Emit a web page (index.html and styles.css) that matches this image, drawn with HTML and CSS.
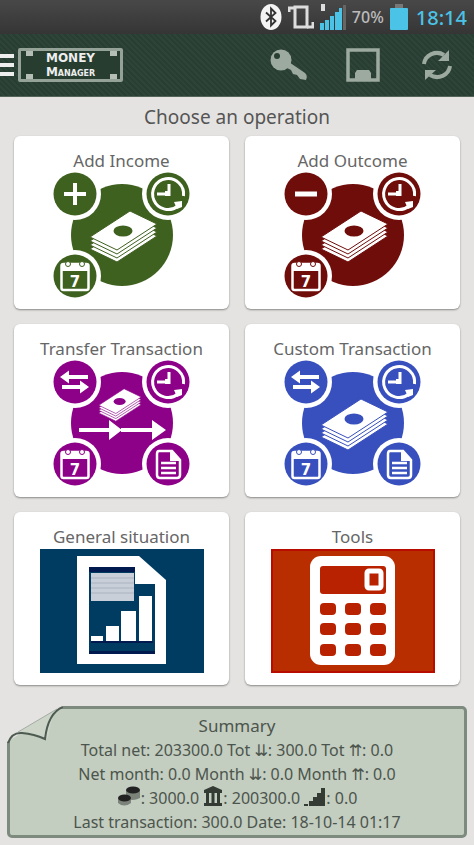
FILE: index.html
```html
<!DOCTYPE html>
<html lang="en">
<head>
    <meta charset="UTF-8">
    <meta name="viewport" content="width=device-width, initial-scale=1.0">
    <title>Money Manager</title>
    <link rel="stylesheet" href="styles.css">
</head>
<body>

    <!-- Shared icon parts -->
    <svg class="defs" aria-hidden="true">
        <symbol id="disc" viewBox="0 0 52 52">
            <circle cx="26" cy="26" r="26" fill="#fff"/>
            <circle cx="26" cy="26" r="21.500" fill="currentColor"/>
        </symbol>
        <symbol id="clock" viewBox="0 0 52 52">
            <use href="#disc"/>
            <path d="M36 38A15.500 15.500 0 1 1 41.500 28" fill="none" stroke="#fff" stroke-width="3"/>
            <path d="M32 34l8-1v6l-5 2z" fill="#fff"/>
            <path d="M27 16v12M15 26h13" fill="none" stroke="#fff" stroke-width="3"/>
            <path d="M23 23h5v5h-5z" fill="#fff"/>
        </symbol>
        <symbol id="calendar" viewBox="0 0 52 52">
            <use href="#disc"/>
            <rect x="12.500" y="14" width="27" height="26" rx="2" fill="none" stroke="#fff" stroke-width="2.500"/>
            <path d="M12 14h28v7H12z" fill="#fff"/>
            <circle cx="19" cy="14" r="2.500" fill="#fff" stroke="currentColor"/>
            <circle cx="33" cy="14" r="2.500" fill="#fff" stroke="currentColor"/>
            <text class="day" x="26" y="37">7</text>
        </symbol>
        <symbol id="swap" viewBox="0 0 52 52">
            <use href="#disc"/>
            <path d="M18 21h21M13 31h20" stroke="#fff" stroke-width="4"/>
            <path d="M11 21l9-6.500v13zM40 31l-9-6.500v13z" fill="#fff"/>
        </symbol>
        <symbol id="note" viewBox="0 0 52 52">
            <use href="#disc"/>
            <path d="M17 13h13l8 9v15q0 3-3 3H18q-3 0-3-3V16q0-3 2-3z" fill="none" stroke="#fff" stroke-width="2.500"/>
            <path d="M28 12l11 11H28z" fill="#fff"/>
            <path d="M19 25h15M19 30h15M19 35h15" stroke="#fff" stroke-width="2.500"/>
        </symbol>
        <symbol id="money" viewBox="0 0 138 126">
            <g fill="#fff" stroke="currentColor" stroke-width="1">
                <path d="M37 77l40-26 27 13-40 26z"/>
                <path d="M37 73l40-26 27 13-40 26z"/>
                <path d="M37 69l40-26 27 13-40 26z"/>
                <path d="M37 65l40-26 27 13-40 26z"/>
            </g>
            <ellipse cx="70" cy="59" rx="9.500" ry="5.500" fill="currentColor"/>
        </symbol>
    </svg>

    <!-- Status bar -->
    <div class="status-bar">
        <svg width="22" height="28" viewBox="0 0 22 28" role="img" aria-label="Bluetooth">
            <ellipse cx="11" cy="14" rx="10.500" ry="13" fill="#f4f4f4"/>
            <path d="M6 9.500l9.500 8.500-4.500 4.500V5.500l4.500 4.500L6 18.500" fill="none" stroke="#333" stroke-width="1.800"/>
        </svg>
        <svg width="26" height="26" viewBox="0 0 26 26" role="img" aria-label="Vibrate">
            <path d="M7 3h12v20H7z" fill="none" stroke="#ddd" stroke-width="3"/>
            <path d="M1 8V4h6M25 18v5h-6" fill="none" stroke="#ddd" stroke-width="3"/>
        </svg>
        <svg width="26" height="26" viewBox="0 0 26 26" role="img" aria-label="Signal">
            <path d="M0 19h4v7H0zM5 16h4v10H5zM10 12h4v14h-4zM15 8h4v18h-4z" fill="#4bc3e6"/>
            <path d="M19 4h3v22h-3z" fill="#4bc3e6"/>
            <path d="M23 1h3v25h-3z" fill="#666"/>
            <path d="M1 0h4v7H1z" fill="#ddd"/>
        </svg>
        <span class="percent">70%</span>
        <svg class="battery" width="18" height="26" viewBox="0 0 18 26" role="img" aria-label="Battery">
            <path d="M5 0h8v5H5z" fill="#777"/>
            <rect y="4" width="18" height="22" rx="1" fill="#4bc3e6"/>
        </svg>
        <span class="time">18:14</span>
    </div>

    <!-- Action bar -->
    <header class="action-bar">
        <button class="menu" aria-label="Menu">
            <svg width="14" height="22" viewBox="0 0 14 22">
                <path d="M0 2h14M0 11h14M0 20h14" stroke="#eee" stroke-width="4"/>
            </svg>
        </button>
        <div class="logo">
            <span class="logo-top">MONEY</span>
            <span class="logo-bottom">Manager</span>
            <i class="rivet tl"></i><i class="rivet tr"></i><i class="rivet bl"></i><i class="rivet br"></i>
        </div>
        <div class="actions">
            <button aria-label="Unlock">
                <svg width="38" height="32" viewBox="0 0 38 32">
                    <path d="M16 11l19 13q3 3 1 7l-6-1-3-4-4-1-2-4-8-4z" fill="#9daa9f"/>
                    <circle cx="11" cy="11" r="10.500" fill="#9daa9f"/>
                    <circle cx="7" cy="7" r="3" fill="#2a3f33"/>
                </svg>
            </button>
            <button aria-label="Save">
                <svg width="34" height="34" viewBox="0 0 34 34">
                    <path d="M2 2h30v30H2z" fill="none" stroke="#9daa9f" stroke-width="3.500"/>
                    <path d="M9 25l2-3h12l2 3v7H9z" fill="#9daa9f"/>
                </svg>
            </button>
            <button aria-label="Refresh">
                <svg width="32" height="32" viewBox="0 0 32 32">
                    <path d="M3 15A13 12.500 0 0 1 23 6M29 17A13 12.500 0 0 1 9 26" fill="none" stroke="#9daa9f" stroke-width="4"/>
                    <path d="M28 1v11H17zM4 31V21h11z" fill="#9daa9f"/>
                </svg>
            </button>
        </div>
    </header>

    <main>
        <h1>Choose an operation</h1>

        <div class="grid">
            <button class="card income">
                <span class="label">Add Income</span>
                <svg width="138" height="126" viewBox="0 0 138 126">
                    <circle cx="69" cy="63" r="51" fill="currentColor"/>
                    <use href="#money" width="138" height="126"/>
                    <use href="#disc" x="-4" y="-4" width="52" height="52"/>
                    <path d="M22 11v22M11 22h22" stroke="#fff" stroke-width="4"/>
                    <use href="#clock" x="89" y="-4" width="52" height="52"/>
                    <use href="#calendar" x="-4" y="78" width="52" height="52"/>
                </svg>
            </button>

            <button class="card outcome">
                <span class="label">Add Outcome</span>
                <svg width="138" height="126" viewBox="0 0 138 126">
                    <circle cx="69" cy="63" r="51" fill="currentColor"/>
                    <use href="#money" width="138" height="126"/>
                    <use href="#disc" x="-4" y="-4" width="52" height="52"/>
                    <path d="M11 22h22" stroke="#fff" stroke-width="5"/>
                    <use href="#clock" x="89" y="-4" width="52" height="52"/>
                    <use href="#calendar" x="-4" y="78" width="52" height="52"/>
                </svg>
            </button>

            <button class="card transfer">
                <span class="label">Transfer Transaction</span>
                <svg width="138" height="126" viewBox="0 0 138 126">
                    <circle cx="69" cy="63" r="51" fill="currentColor"/>
                    <use href="#money" x="22" y="4" width="88" height="80"/>
                    <path d="M26 70h32M68 70h34" stroke="#fff" stroke-width="4"/>
                    <path d="M56 60l13 10-13 10zM99 60l14 10-14 10z" fill="#fff"/>
                    <use href="#swap" x="-4" y="-4" width="52" height="52"/>
                    <use href="#clock" x="89" y="-4" width="52" height="52"/>
                    <use href="#calendar" x="-4" y="78" width="52" height="52"/>
                    <use href="#note" x="89" y="78" width="52" height="52"/>
                </svg>
            </button>

            <button class="card custom">
                <span class="label">Custom Transaction</span>
                <svg width="138" height="126" viewBox="0 0 138 126">
                    <circle cx="69" cy="63" r="51" fill="currentColor"/>
                    <use href="#money" width="138" height="126"/>
                    <use href="#swap" x="-4" y="-4" width="52" height="52"/>
                    <use href="#clock" x="89" y="-4" width="52" height="52"/>
                    <use href="#calendar" x="-4" y="78" width="52" height="52"/>
                    <use href="#note" x="89" y="78" width="52" height="52"/>
                </svg>
            </button>

            <button class="card">
                <span class="label">General situation</span>
                <svg width="164" height="126" viewBox="0 0 164 126">
                    <path d="M0 1h164v124H0z" fill="#003c62"/>
                    <path d="M37 8h62l27 24v84H37z" fill="#fff"/>
                    <path d="M49 19h46v17h20v70H49z" fill="#003c62"/>
                    <path d="M49 19h46v5H49zM49 103h66v3H49z" fill="#001a50"/>
                    <path d="M51 25h43v28H51z" fill="#c9cfd8"/>
                    <path d="M51 30h43M51 35h43M51 40h43M51 45h43" stroke="#aab3c2"/>
                    <path d="M51 88h12v5H51zM66 78h13v15H66zM81 63h15v30H81zM99 48h13v45H99z" fill="#fff"/>
                    <path d="M51 94h62" stroke="#001a50" stroke-width="2"/>
                </svg>
            </button>

            <button class="card">
                <span class="label">Tools</span>
                <svg width="164" height="126" viewBox="0 0 164 126">
                    <path d="M1 2h162v122H1z" fill="#b92e00" stroke="#b90c00" stroke-width="2"/>
                    <rect x="39" y="8" width="85" height="109" rx="11" fill="#fff"/>
                    <g fill="#b92200">
                        <rect x="49" y="18" width="66" height="28" rx="3"/>
                        <rect x="49" y="55" width="16" height="12" rx="4"/>
                        <rect x="74" y="55" width="16" height="12" rx="4"/>
                        <rect x="99" y="55" width="16" height="12" rx="4"/>
                        <rect x="49" y="75" width="16" height="12" rx="4"/>
                        <rect x="74" y="75" width="16" height="12" rx="4"/>
                        <rect x="99" y="75" width="16" height="12" rx="4"/>
                        <rect x="49" y="96" width="16" height="12" rx="4"/>
                        <rect x="74" y="96" width="16" height="12" rx="4"/>
                        <rect x="99" y="96" width="16" height="12" rx="4"/>
                    </g>
                    <rect x="96" y="23" width="14" height="17" rx="2" fill="none" stroke="#fff" stroke-width="5"/>
                </svg>
            </button>
        </div>

        <!-- Summary note -->
        <section class="summary">
            <svg class="fold" width="56" height="38" viewBox="0 0 56 38" aria-hidden="true">
                <path d="M0 0h56v1L0 36z" fill="#e4e3e1"/>
                <path d="M11 26L50 3q-5 6-9 29-15-5-30-6z" fill="#cdd5c9"/>
                <path d="M11 26L50 3" stroke="#a3ada3" fill="none"/>
                <path d="M1 37q4-11 14-10 12 1 23 6 3-26 18-32" fill="none" stroke="#4d5b50" stroke-width="2"/>
            </svg>
            <h2>Summary</h2>
            <p>Total net: 203300.0 Tot ⇊: 300.0 Tot ⇈: 0.0</p>
            <p>Net month: 0.0 Month ⇊: 0.0 Month ⇈: 0.0</p>
            <p>
                <svg width="24" height="20" viewBox="0 0 24 20" role="img" aria-label="Cash">
                    <path d="M9 4v8q6 4 14 0V4z" fill="#7c837b"/>
                    <ellipse cx="16" cy="4" rx="7" ry="3.500" fill="#222"/>
                    <path d="M1 12v5q6 5 13 0v-5z" fill="#7c837b"/>
                    <ellipse cx="7.500" cy="12" rx="6.500" ry="3.500" fill="#222"/>
                </svg>: 3000.0
                <svg width="20" height="20" viewBox="0 0 20 20" role="img" aria-label="Bank">
                    <path d="M10 0l9 4v3H1V4zM1 17h18v3H1zM3 7h3v10H3zM8.500 7h3v10h-3zM14 7h3v10h-3z" fill="#333b34"/>
                </svg>: 200300.0
                <svg width="22" height="18" viewBox="0 0 22 18" role="img" aria-label="Stocks">
                    <path d="M0 16h4v2H0zM5 13h4v5H5zM9 9h4v9H9zM13 5h4v13h-4zM17 0h4v18h-4z" fill="#333b34"/>
                </svg>: 0.0
            </p>
            <p>Last transaction: 300.0 Date: 18-10-14 01:17</p>
        </section>
    </main>

</body>
</html>
```
FILE: styles.css
```css
* {
    box-sizing: border-box;
}
body {
    margin: 0;
    background-color: #e4e3e1;
    color: #555;
    font-family: "Noto Sans", "Open Sans", "DejaVu Sans", sans-serif;
}
button {
    padding: 0;
    border: none;
    background: none;
    font: inherit;
    color: inherit;
    cursor: pointer;
}
.defs {
    display: none;
}
.day {
    fill: #fff;
    font-family: "DejaVu Sans", sans-serif;
    font-size: 15px;
    font-weight: bold;
    text-anchor: middle;
}

/* Status bar */
.status-bar {
    display: flex;
    align-items: center;
    justify-content: flex-end;
    gap: 6px;
    height: 34px;
    padding-right: 7px;
    background: linear-gradient(#484848, #353535);
}
.percent {
    font-size: 16px;
    font-weight: 500;
    color: #bbb;
}
.time {
    margin-left: 2px;
    font-size: 20px;
    font-weight: 500;
    color: #4bc3e6;
}

/* Action bar */
.action-bar {
    display: flex;
    align-items: center;
    height: 63px;
    padding-bottom: 1px;
    border-bottom: 1px solid #56635a;
    background: repeating-linear-gradient(45deg, #283e32 0 2px, #2e4438 2px 4px);
}
.menu {
    display: flex;
    margin-right: 4px;
}
.logo {
    position: relative;
    display: flex;
    flex-direction: column;
    align-items: center;
    justify-content: center;
    width: 105px;
    height: 34px;
    border: 3px solid #94a297;
    border-radius: 2px;
    background-color: #263d30;
    color: #eee;
    font-family: "DejaVu Sans", sans-serif;
    font-size: 12px;
    font-weight: bold;
    line-height: 14px;
}
.logo-bottom {
    font-variant: small-caps;
}
.rivet {
    position: absolute;
    width: 7px;
    height: 5px;
    background-color: #b4beb6;
}
.tl { top: 0; left: 5px; }
.tr { top: 0; right: 3px; }
.bl { bottom: 0; left: 5px; }
.br { bottom: 0; right: 3px; }
.actions {
    display: flex;
    margin-left: auto;
}
.actions button {
    display: flex;
    align-items: center;
    justify-content: center;
    width: 74px;
    height: 48px;
}

/* Operations */
main {
    padding: 8px 7px;
}
h1 {
    margin: 0 0 7px;
    font-size: 19px;
    font-weight: normal;
    line-height: 24px;
    text-align: center;
}
.grid {
    display: grid;
    grid-template-columns: 1fr 1fr;
    gap: 15px 16px;
    padding: 0 7px;
}
.card {
    display: flex;
    flex-direction: column;
    align-items: center;
    padding: 13px 0 11px;
    border-radius: 6px;
    background-color: #fff;
    box-shadow: 0 1px 2px rgba(0, 0, 0, 0.4);
}
.label {
    font-size: 17px;
    line-height: 23px;
    color: #666;
}
.income svg { color: #3f6120; }
.outcome svg { color: #6f0d0b; }
.transfer svg { color: #8d0088; }
.custom svg { color: #3850bd; }

/* Summary */
.summary {
    position: relative;
    margin-top: 21px;
    padding: 5px 0 1px;
    border: 3px solid #7d8b7f;
    border-radius: 5px;
    background-color: #c3cdc0;
    color: #4c554d;
    text-align: center;
}
.summary h2, .summary p {
    margin: 0;
    font-size: 16px;
    font-weight: normal;
    line-height: 24px;
}
.summary h2 {
    font-size: 17px;
}
.summary p svg {
    vertical-align: -2px;
}
.fold {
    position: absolute;
    top: -3px;
    left: -3px;
}
```
